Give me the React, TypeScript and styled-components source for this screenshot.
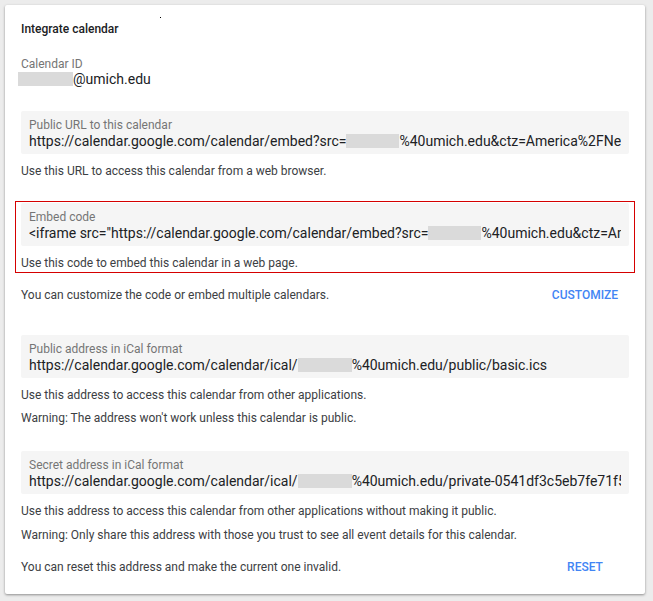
import styled, { createGlobalStyle } from 'styled-components';

const GlobalStyle = createGlobalStyle`
  html, body {
    margin: 0;
    padding: 0;
    background: #ececec;
  }
  body {
    padding: 5px;
    font-family: Roboto, "Noto Sans", Arial, sans-serif;
  }
`;

const Card = styled.div`
  position: relative;
  box-sizing: border-box;
  width: 640px;
  min-height: 589px;
  background: #fff;
  padding: 16px 16px 9px;
  box-shadow: 0 1px 3px rgba(0, 0, 0, 0.28), 0 1px 2px rgba(0, 0, 0, 0.14);
  border-radius: 2px;
`;

const Speck = styled.span`
  position: absolute;
  left: 155px;
  top: 12px;
  width: 1px;
  height: 1px;
  background: #000;
`;

const Title = styled.div`
  font-size: 12px;
  line-height: 16px;
  font-weight: 500;
  color: #202124;
`;

const IdBlock = styled.div`
  margin-top: 20px;
  margin-bottom: 24px;
`;

const Label = styled.div`
  font-size: 12px;
  line-height: 14px;
  color: #757575;
`;

const IdValue = styled.div`
  font-size: 14px;
  line-height: 16px;
  color: #202124;
  margin-left: -3px;
  display: flex;
  align-items: center;
`;

const Redact = styled.span<{ $w: number }>`
  display: inline-block;
  width: ${({ $w }) => $w}px;
  height: 14px;
  background: #dadada;
  vertical-align: -2px;
`;

const Field = styled.div`
  background: #f5f5f5;
  border-radius: 2px;
  padding: 7px 8px 4px;
`;

const Value = styled.div`
  font-size: 14px;
  line-height: 18px;
  color: #202124;
  white-space: nowrap;
  overflow: hidden;
`;

const Help = styled.div<{ $gap?: number }>`
  margin-top: ${({ $gap }) => $gap ?? 10}px;
  font-size: 12px;
  line-height: 14px;
  color: #3c4043;
`;

const Focused = styled.div`
  margin: 23px -6px 0;
  border: 1px solid #d50000;
  padding: 1px 5px 2px;
`;

const Section = styled.div<{ $gap: number }>`
  margin-top: ${({ $gap }) => $gap}px;
`;

const ActionRow = styled.div<{ $gap: number }>`
  margin-top: ${({ $gap }) => $gap}px;
  height: 36px;
  display: flex;
  align-items: center;
  justify-content: space-between;
`;

const RowText = styled.span`
  font-size: 12px;
  line-height: 14px;
  color: #3c4043;
`;

const FlatButton = styled.button`
  min-width: 88px;
  height: 36px;
  padding: 0 8px;
  border: none;
  background: transparent;
  font-family: inherit;
  font-size: 12px;
  font-weight: 500;
  color: #4285f4;
  text-transform: uppercase;
  text-align: center;
  cursor: pointer;
`;

export default function App() {
  return (
    <>
      <GlobalStyle />
      <Card>
        <Speck />
        <Title>Integrate calendar</Title>

        <IdBlock>
          <Label>Calendar ID</Label>
          <IdValue>
            <Redact $w={55} />@umich.edu
          </IdValue>
        </IdBlock>

        <Field>
          <Label>Public URL to this calendar</Label>
          <Value>
            https://calendar.google.com/calendar/embed?src=<Redact $w={53} />%40umich.edu&amp;ctz=America%2FNew_York
          </Value>
        </Field>
        <Help>Use this URL to access this calendar from a web browser.</Help>

        <Focused>
          <Field>
            <Label>Embed code</Label>
            <Value>
              &lt;iframe src="https://calendar.google.com/calendar/embed?src=<Redact $w={53} />%40umich.edu&amp;ctz=America%2FNew_York"
            </Value>
          </Field>
          <Help>Use this code to embed this calendar in a web page.</Help>
        </Focused>

        <ActionRow $gap={4}>
          <RowText>You can customize the code or embed multiple calendars.</RowText>
          <FlatButton>Customize</FlatButton>
        </ActionRow>

        <Section $gap={22}>
          <Field>
            <Label>Public address in iCal format</Label>
            <Value>
              https://calendar.google.com/calendar/ical/<Redact $w={54} />%40umich.edu/public/basic.ics
            </Value>
          </Field>
          <Help>Use this address to access this calendar from other applications.</Help>
          <Help $gap={9}>Warning: The address won't work unless this calendar is public.</Help>
        </Section>

        <Section $gap={26}>
          <Field>
            <Label>Secret address in iCal format</Label>
            <Value>
              https://calendar.google.com/calendar/ical/<Redact $w={54} />%40umich.edu/private-0541df3c5eb7fe71f5a2c8d4e9b3a6f1/basic.ics
            </Value>
          </Field>
          <Help>Use this address to access this calendar from other applications without making it public.</Help>
          <Help>Warning: Only share this address with those you trust to see all event details for this calendar.</Help>
        </Section>

        <ActionRow $gap={7}>
          <RowText>You can reset this address and make the current one invalid.</RowText>
          <FlatButton>Reset</FlatButton>
        </ActionRow>
      </Card>
    </>
  );
}
